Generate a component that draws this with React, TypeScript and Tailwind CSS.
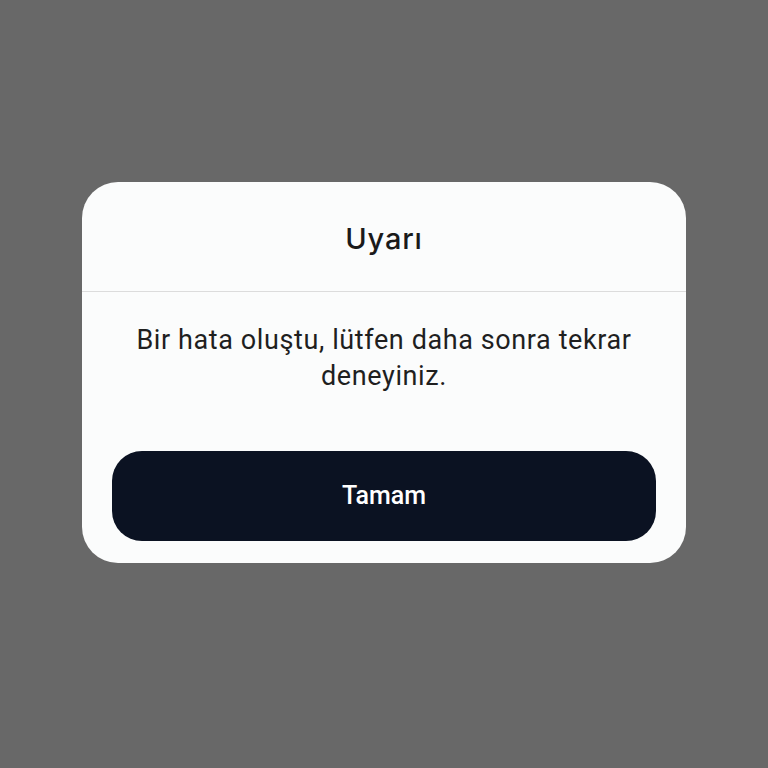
export default function App() {
  return (
    <div className="w-[768px] h-[768px] bg-[#686868] flex items-start justify-center pt-[182px]">
      <div className="w-[604px] h-[381px] bg-[#fbfcfc] rounded-[36px] flex flex-col">
        {/* Header */}
        <div className="h-[110px] flex items-center justify-center border-b border-[#dcdcdc]">
          <span className="text-[29px] font-medium tracking-[0.8px] text-[#1a1a1a] font-['Inter',sans-serif] pt-[4px]">
            Uyarı
          </span>
        </div>

        {/* Body */}
        <div className="px-[40px] pt-[30px] text-center">
          <p className="text-[27px] leading-[36px] tracking-[0.6px] text-[#1f1f1f] font-['Roboto',sans-serif]">
            Bir hata oluştu, lütfen daha sonra tekrar deneyiniz.
          </p>
        </div>

        {/* Action */}
        <div className="px-[30px] mt-auto pb-[22px]">
          <button className="w-full h-[90px] rounded-[30px] bg-[#0b1222] text-white text-[25px] font-medium font-['Roboto',sans-serif]">
            Tamam
          </button>
        </div>
      </div>
    </div>
  )
}
